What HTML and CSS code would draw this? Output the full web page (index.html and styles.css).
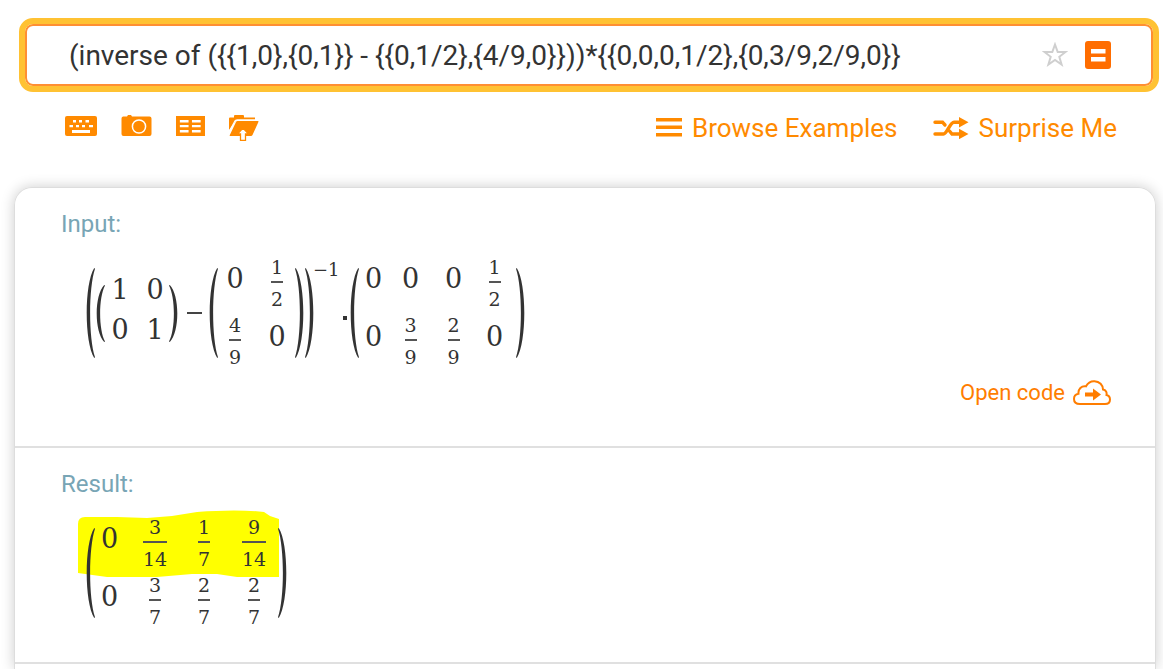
FILE: index.html
```
<!DOCTYPE html>
<html lang="en">
<head>
<meta charset="utf-8">
<title>Matrix computation</title>
<meta name="viewport" content="width=device-width, initial-scale=1">
<link rel="stylesheet" href="styles.css">
</head>
<body>
<svg width="0" height="0" class="defs" aria-hidden="true">
  <symbol id="paren" viewBox="0 0 9 90" preserveAspectRatio="none">
    <path d="M8.2 0 C-1.800 16 -1.800 74 8.2 90 L9 89.300 C2.500 70 2.500 20 9 .7Z"/>
  </symbol>
</svg>
<header class="top">
  <form class="search">
    <input class="query" type="text" aria-label="Query" value="(inverse of ({{1,0},{0,1}} - {{0,1/2},{4/9,0}}))*{{0,0,0,1/2},{0,3/9,2/9,0}}">
    <button class="icon-button" type="button" aria-label="Favorite">
      <svg width="26" height="26" viewBox="0 0 26 26"><path d="M13 2.500 15.700 10H23.500L17.300 14.800 19.600 22.500 13 18 6.400 22.500 8.700 14.800 2.500 10H10.300Z" fill="none" stroke="#cfcfcf" stroke-width="2"/></svg>
    </button>
    <button class="icon-button" type="submit" aria-label="Compute">
      <svg width="26" height="28" viewBox="0 0 26 28"><rect width="26" height="28" rx="3" fill="#ff6d00"/><path d="M6 8h14.500v4.500H6zM6 16h14.500v4.500H6z" fill="#fff"/></svg>
    </button>
  </form>
  <nav class="tools">
    <div class="inputs">
      <button class="icon-button" type="button" aria-label="Keyboard">
        <svg width="32" height="28" viewBox="0 0 32 28"><rect y="4" width="32" height="20" rx="2" fill="#ff8a00"/><path d="M8 8h3v2.500H8zM14 8h3v2.500h-3zM20.500 8h3.500v2.500h-3.500zM4.500 13H8v2.200H4.500zM11 13h3v2.200h-3zM17 13h3v2.200h-3zM24 13h4v2.200h-4zM7 18h18v3H7z" fill="#fff"/></svg>
      </button>
      <button class="icon-button" type="button" aria-label="Camera">
        <svg width="31" height="28" viewBox="0 0 31 28"><path d="M2 4.500h4l1-1.500h3l1 1.500h17.500a2 2 0 0 1 2 2v15.500a2 2 0 0 1-2 2H2.500a2 2 0 0 1-2-2V6.500a2 2 0 0 1 1.500-2Z" fill="#ff8a00"/><circle cx="18" cy="14.500" r="6.600" fill="none" stroke="#fff" stroke-width="1.500"/></svg>
      </button>
      <button class="icon-button" type="button" aria-label="Data">
        <svg width="29" height="28" viewBox="0 0 30 28" preserveAspectRatio="none"><path d="M0 4h30v20H0z" fill="#ff8a00"/><path d="M4 8h9v2.500H4zM16.500 8h9v2.500h-9zM4 13h9v2.300H4zM16.500 13h9v2.300h-9zM4 18h9v2.500H4zM16.500 18h9v2.500h-9z" fill="#fff"/></svg>
      </button>
      <button class="icon-button" type="button" aria-label="File upload">
        <svg width="30" height="30" viewBox="0 0 30 30"><path d="M0 18V6.500q0-1 1-1h4V4q0-1 1-1h8q1 0 1 1v1.500h11v2H8.500q-1 0-1.700 1Z" fill="#ff8a00"/><path d="M8.500 9H29q.8 0 .5.8L23.500 23q-.5 1-1.500 1H1.500q-1.200 0-.7-1L7 10q.5-1 1.500-1Z" fill="#ff8a00"/><path d="M0 20 6 8.800q.5-.6 1.500-.6H27" fill="none" stroke="#fff" stroke-width="1.200"/><path d="m14 16 5.500 6h-3v6.300h-5V22h-3Z" fill="#fff" stroke="#ff8a00" stroke-width="1.300"/></svg>
      </button>
    </div>
    <div class="links">
      <a class="link" href="#">
        <svg width="26" height="20" viewBox="0 0 26 20"><path d="M0 0h26v3.500H0zM0 7.500h26V11H0zM0 15h26v3.500H0z" fill="currentColor"/></svg>Browse Examples</a>
      <a class="link" href="#">
        <svg width="36" height="22" viewBox="0 0 36 22"><path d="M2 5.200H9.500L12 8M2 17H10.500C14 17 17 5.200 21 5.200H28M16.500 14 19 17H28" fill="none" stroke="currentColor" stroke-width="3.400" stroke-linecap="round"/><path d="m26 0 9.500 5.200-9.500 5.200ZM26 11.800l9.500 5.200-9.500 5.200Z" fill="currentColor"/></svg>Surprise Me</a>
    </div>
  </nav>
</header>
<main class="card">
  <section class="pod">
    <h2 class="title">Input:</h2>
    <div class="formula">
      <svg class="paren tall"><use href="#paren"/></svg>
      <svg class="paren short"><use href="#paren"/></svg>
      <div class="matrix identity"><span>1</span><span>0</span><span>0</span><span>1</span></div>
      <svg class="paren short close"><use href="#paren"/></svg>
      <span class="minus"></span>
      <svg class="paren tall"><use href="#paren"/></svg>
      <div class="matrix two">
        <span>0</span><span class="frac"><span>1</span><span>2</span></span>
        <span class="frac"><span>4</span><span>9</span></span><span>0</span>
      </div>
      <svg class="paren tall close"><use href="#paren"/></svg>
      <svg class="paren tall close"><use href="#paren"/></svg>
      <span class="power">−1</span>
      <span class="dot"></span>
      <svg class="paren tall"><use href="#paren"/></svg>
      <div class="matrix four">
        <span>0</span><span>0</span><span>0</span><span class="frac"><span>1</span><span>2</span></span>
        <span>0</span><span class="frac"><span>3</span><span>9</span></span><span class="frac"><span>2</span><span>9</span></span><span>0</span>
      </div>
      <svg class="paren tall close"><use href="#paren"/></svg>
    </div>
    <a class="open-code" href="#">Open code
      <svg width="38" height="26" viewBox="0 0 38 26"><path d="M7 24C3 24 1 22 1 19c0-3 2-5 4.500-5.300C5 9 8.500 5.500 13 6.300 15 2.500 18 1 21.500 1.200c5 .2 8.500 4 8.500 8.300 3 .5 4 3 3.500 5.500 2.300.5 3.500 2.500 3.500 4.500 0 3-2 4.500-5 4.500Z" fill="none" stroke="currentColor" stroke-width="2"/><path d="M12 12.500h8V8.500l8 6-8 6v-4H12Z" fill="currentColor"/></svg></a>
  </section>
  <section class="pod">
    <h2 class="title">Result:</h2>
    <div class="formula">
      <svg class="marker" width="204" height="68" viewBox="0 0 204 68"><path d="M1 14Q1 7 8 7H40L70 8 95 6 120 2Q160-1 187 2L193 6 202 9V67H160L140 64H115L80 67H30L1 63Z" fill="#ff0"/></svg>
      <svg class="paren tall"><use href="#paren"/></svg>
      <div class="matrix result">
        <span>0</span><span class="frac"><span>3</span><span>14</span></span><span class="frac"><span>1</span><span>7</span></span><span class="frac"><span>9</span><span>14</span></span>
        <span>0</span><span class="frac"><span>3</span><span>7</span></span><span class="frac"><span>2</span><span>7</span></span><span class="frac"><span>2</span><span>7</span></span>
      </div>
      <svg class="paren tall close"><use href="#paren"/></svg>
    </div>
  </section>
</main>
</body>
</html>
```
FILE: styles.css
```
* { box-sizing: border-box; }
body {
  margin: 0;
  min-height: 100vh;
  display: flex;
  flex-direction: column;
  background: #fff;
  font-family: Roboto, sans-serif;
}
.defs { position: absolute; }
svg { display: block; flex: none; }
.top { padding: 18px 4px 0 19px; }
.search {
  display: flex;
  align-items: center;
  gap: 17px;
  height: 74px;
  padding: 0 42px;
  border: 6px solid #ffc233;
  border-radius: 14px;
  box-shadow: inset 0 0 0 2px #ff8f33;
}
.query {
  flex: 1;
  min-width: 0;
  padding: 2px 0 0 2px;
  border: 0;
  outline: 0;
  background: transparent;
  color: #333;
  font: 28px/34px Roboto, sans-serif;
}
.icon-button { padding: 0; border: 0; background: none; }
.tools {
  display: flex;
  justify-content: space-between;
  padding: 20px 42px 0 46px;
}
.inputs { display: flex; align-items: flex-start; gap: 24px; }
.links { display: flex; gap: 35px; }
.link {
  display: flex;
  align-items: center;
  gap: 10px;
  color: #ff8a00;
  font-size: 26px;
  line-height: 32px;
  text-decoration: none;
}
.card {
  flex: 1;
  margin: 43px 7px 0 14px;
  border: 1px solid #ddd;
  border-bottom: 0;
  border-radius: 18px 18px 0 0;
  box-shadow: 0 0 14px rgba(0, 0, 0, .2);
}
.pod {
  padding: 20px 44px 34px 46px;
  border-bottom: 2px solid #e0e0e0;
}
.title {
  margin: 0;
  color: #78a5b5;
  font-size: 24px;
  font-weight: 400;
  line-height: 32px;
}
.formula {
  position: relative;
  z-index: 0;
  display: flex;
  align-items: center;
  width: max-content;
  margin-top: 12px;
  padding-left: 25px;
  color: #333;
  font: 27px/32px "DejaVu Serif", serif;
}
.paren { width: 9px; margin: 6px 1px 0 0; fill: #333; }
.tall { height: 90px; }
.short { height: 57px; }
.close { transform: scaleX(-1); }
.matrix {
  display: grid;
  grid-auto-rows: 58px;
  align-items: center;
  justify-items: center;
}
.matrix > span { padding-bottom: 4px; }
.identity {
  grid-template-columns: 28px 28px;
  grid-auto-rows: 40px;
  column-gap: 7px;
}
.matrix.identity > span { padding: 0; }
.two {
  grid-template-columns: 32px 32px;
  column-gap: 10px;
  padding-right: 2px;
}
.four { grid-template-columns: 28px 46px 40px 42px; }
.result { grid-template-columns: 36px 46px 52px 48px; }
.result > span:nth-child(4n + 1) { justify-self: start; padding-left: 5px; }
.matrix > .frac {
  display: flex;
  flex-direction: column;
  align-items: center;
  padding: 4px 0 0;
  font-size: 19px;
  line-height: 20px;
}
.frac span:first-child { padding-bottom: 4px; }
.frac span:last-child { padding: 6px 0 0; border-top: 2px solid #555; }
.minus { width: 15px; height: 2px; margin: 6px 7px 0 8px; background: #444; }
.power { align-self: flex-start; margin-left: -2px; font-size: 18px; line-height: 36px; }
.dot { width: 4px; height: 4px; margin: 16px 3px 0; background: #333; }
.open-code {
  display: flex;
  align-items: center;
  justify-content: flex-end;
  gap: 8px;
  margin: 12px 0 6px;
  color: #ff7d00;
  font-size: 22px;
  line-height: 26px;
  text-decoration: none;
}
.marker { position: absolute; z-index: -1; left: 16px; top: -2px; }
```
